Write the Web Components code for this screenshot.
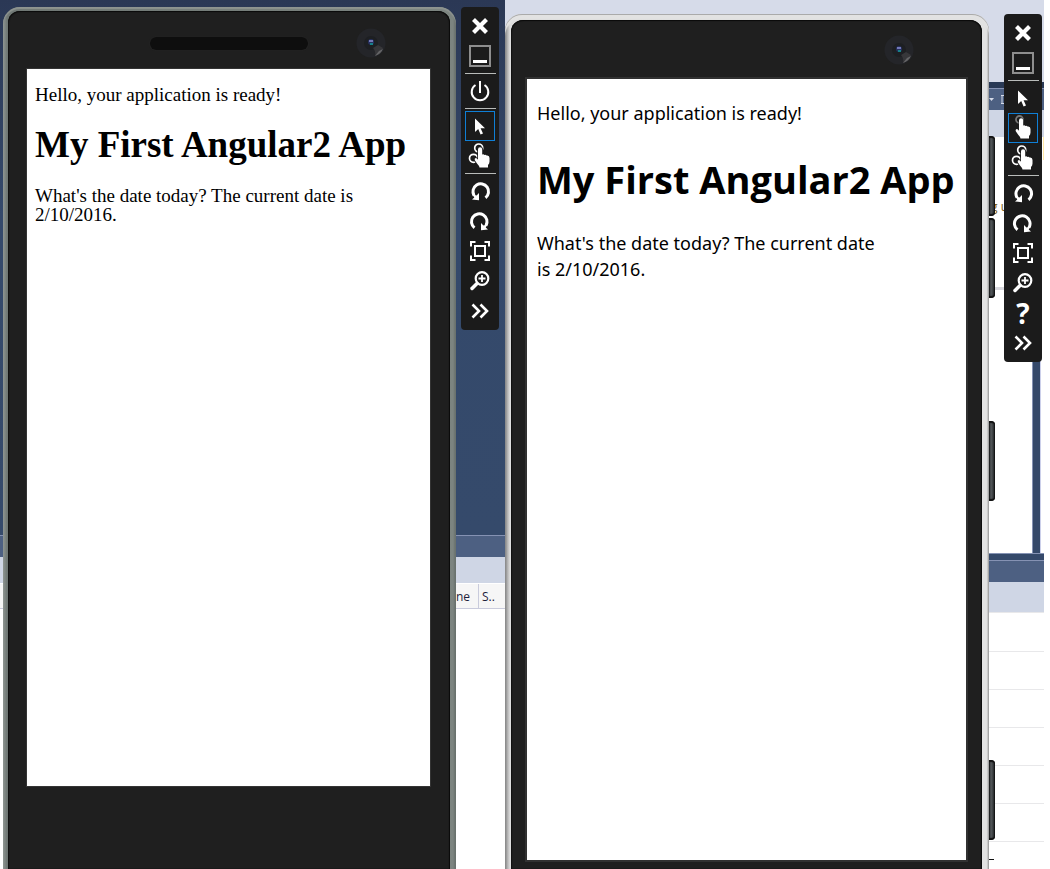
<!DOCTYPE html>
<html lang="en">
<head>
<meta charset="utf-8">
<title>Device emulators</title>
<style>
html, body { margin: 0; background: #fff; }
body { font-family: "Open Sans", sans-serif; }
</style>
</head>
<body>
<emulator-desktop>
  <emulator-scene class="android">
    <ide-output slot="backdrop"></ide-output>
    <phone-device class="dark" speaker>
      <p>Hello, your application is ready!</p>
      <h1>My First Angular2 App</h1>
      <p>What's the date today? The current date is 2/10/2016.</p>
    </phone-device>
    <tool-bar items="close,minimize,|,power,|,pointer*,multitouch,|,rotateleft,rotateright,fit,zoom,more"></tool-bar>
  </emulator-scene>
  <emulator-scene class="windows">
    <ide-window slot="backdrop"></ide-window>
    <phone-device class="light">
      <p>Hello, your application is ready!</p>
      <h1>My First Angular2 App</h1>
      <p>What's the date today? The current date<br>is 2/10/2016.</p>
    </phone-device>
    <side-keys></side-keys>
    <tool-bar items="close,minimize,|,pointer,touch*,multitouch,|,rotateleft,rotateright,fit,zoom,help,more"></tool-bar>
  </emulator-scene>
</emulator-desktop>

<script>
function define(name, markup, setup) {
  customElements.define(name, class extends HTMLElement {
    constructor() {
      super();
      this.attachShadow({ mode: "open" }).innerHTML = markup;
    }
    connectedCallback() {
      if (setup) setup(this, this.shadowRoot);
    }
  });
}

define("emulator-desktop", `
<style>
:host { display: grid; grid-template-columns: minmax(0, 505fr) minmax(0, 539fr); min-height: 100vh; padding-right: 6px; box-sizing: border-box; }
</style><slot></slot>`);

define("emulator-scene", `
<style>
:host { display: grid; overflow: hidden; }
.back, .front { grid-area: 1 / 1; display: flex; min-width: 0; }
.back ::slotted(*) { flex: 1; min-width: 0; }
.front { z-index: 1; align-items: flex-start; }
.front ::slotted(phone-device) { flex: 1; align-self: stretch; min-width: 0; }
:host(.android) .front { padding: 7px 6px 0 3px; gap: 5px; }
:host(.windows) .front { padding: 14px 2px 0 0; }
</style>
<div class="back"><slot name="backdrop"></slot></div>
<div class="front"><slot></slot></div>`);

define("ide-output", `
<style>
:host { display: flex; flex-direction: column; background: #fff; }
.desk { height: 535px; background: linear-gradient(#2b3855, #34496b 40%, #354a6b); }
.title { height: 21px; border-top: 1px solid #8592b3; background: #4d6082; }
.tools { height: 26px; background: #cfd6e5; }
.head { height: 24px; display: flex; justify-content: flex-end; border-top: 1px solid #fff; border-bottom: 1px solid #c9cbdc; background: #f6f6f6; color: #1e1e3c; font: 12px/24px "Open Sans", sans-serif; }
.head span { box-sizing: border-box; padding: 1px 8px 0 0; }
.head .last { width: 27px; padding: 1px 0 0 3px; border-left: 1px solid #c9cbdc; }
</style>
<div class="desk"></div><div class="title"></div><div class="tools"></div>
<div class="head"><span>ne</span><span class="last">S..</span></div>`);

define("ide-window", `
<style>
:host { display: flex; flex-direction: column; background: #fff; }
.sky { height: 82px; background: #d6dbe9; }
.edge { height: 6px; background: #293955; }
.menu { height: 21px; border-top: 1px solid #8592b3; background: #4d6082; display: flex; justify-content: flex-end; align-items: center; }
.menu svg { width: 20px; height: 12px; margin-right: 36px; }
.tools { height: 27px; background: #cfd6e5; }
.work { display: flex; height: 416px; }
.doc { flex: 1; display: flex; flex-direction: column; align-items: flex-end; border-right: 1px solid #8592b3; }
.code { height: 153px; width: 100%; box-sizing: border-box; padding: 60px 24px 0 0; border-bottom: 3px solid #d9d9df; text-align: right; color: #7a5c14; font: 12px/20px "Open Sans", sans-serif; }
.rail { width: 7px; background: #35496a; }
.side { width: 3px; border-left: 1px solid #ccd0ea; }
.mark { height: 23px; margin-left: 2px; background: #ffe8a6; }
.gap { height: 6px; border-top: 1px solid #8592b3; background: #35496a; }
.title { height: 21px; border-top: 1px solid #8592b3; background: #4d6082; }
.bar { height: 30px; background: #cfd6e5; }
.row { height: 37px; border-bottom: 1px solid #e8e8ea; }
.first { height: 38px; border-top: 1px solid #e8e8ea; }
.dash { width: 5px; height: 1px; margin: 17px 50px 0 0; align-self: flex-end; background: #111; }
</style>
<div class="sky"></div><div class="edge"></div>
<div class="menu"><svg viewBox="0 0 20 12" fill="none" stroke="#d6dbe9"><path d="M1 4h5l-2.500 3z" fill="#d6dbe9" stroke="none"/><path d="M17 1.500h-3v8h3M13 1.500h2M13 9.500h2"/></svg></div>
<div class="tools"></div>
<div class="work"><div class="doc"><div class="code">g u</div></div><div class="rail"></div><div class="side"><div class="mark"></div></div></div>
<div class="gap"></div><div class="title"></div><div class="bar"></div>
<div class="row first"></div><div class="row"></div><div class="row"></div><div class="row"></div><div class="row"></div><div class="row"></div>
<div class="dash"></div>`);

define("phone-device", `
<style>
:host { display: flex; box-sizing: border-box; border-radius: 17px 17px 0 0; }
:host(.dark) { padding: 4px 6px 0 5px; background: linear-gradient(90deg, #8f9692, #6f7774 4px, #7c8480 calc(100% - 3px), #626a67); box-shadow: inset 0 2px 1px #8e9490; }
:host(.light) { padding: 6px 7px 0 6px; background: linear-gradient(90deg, #777 0, #aaa 2px, #ddd 5px, #e2e2e2 calc(100% - 3px), #ddd calc(100% - 2px), #888 100%); box-shadow: inset 0 1px 0 #aaa, inset 0 5px 1px #e2e2e2; }
.body { flex: 1; min-width: 0; display: flex; flex-direction: column; border-radius: 12px 12px 0 0; background: #1f1f1f; box-shadow: inset 0 1px 1px #0b0b0b, inset 1px 0 1px #111, inset -1px 0 1px #0b0b0b; }
.head { height: 57px; display: grid; grid-template-columns: 1fr 158px 1fr; align-items: center; box-sizing: border-box; padding-top: 6px; }
:host(.light) .head { padding-top: 3px; }
.speaker { grid-column: 2; height: 13px; margin-top: 2px; border-radius: 6px; background: #0e0e0e; box-shadow: 0 0 1px #383838; visibility: hidden; }
:host([speaker]) .speaker { visibility: visible; }
.camera { width: 30px; height: 30px; grid-column: 3; justify-self: end; margin-right: 64px; }
:host(.light) .camera { margin-right: 68px; }
.screen { flex: 1; background: #fff; color: #000; box-sizing: border-box; }
:host(.dark) .screen { margin: 0 19px 82px 18px; border: 1px solid #343434; padding: 16px 8px; font-family: "Liberation Serif", serif; }
:host(.light) .screen { margin: 0 14px 7px; border: 2px solid #313131; padding: 21px 10px; font-family: "Noto Sans", "Open Sans", sans-serif; }
::slotted(p), ::slotted(h1) { margin: 0 !important; }
:host(.dark) ::slotted(p) { font-size: 19px; line-height: 19px; }
:host(.dark) ::slotted(h1) { font-size: 37px; line-height: 44px; margin: 19px 0 !important; white-space: nowrap; }
:host(.light) ::slotted(p) { font-size: 18px; line-height: 26px; }
:host(.light) ::slotted(h1) { font-family: "Open Sans", sans-serif; font-size: 38px; line-height: 52px; margin: 27px 0 25px !important; white-space: nowrap; }
</style>
<div class="body">
  <div class="head"><div class="speaker"></div>
    <svg class="camera" viewBox="0 0 30 30"><circle cx="15" cy="15" r="14.500" fill="#242529"/><circle cx="15" cy="15" r="7" fill="#1d1f22"/><path d="M17 20q3 3 2 8q6-2 8-8l-5-3z" fill="#37373a"/><path d="M19 28q6-2 8-7l-4 2z" fill="#656567"/><circle cx="15" cy="14" r="3" fill="#26305e"/><rect x="13" y="12" width="4" height="2" fill="#7379b8"/><rect x="14" y="15" width="3" height="2" fill="#16808a"/></svg>
  </div>
  <div class="screen"><slot></slot></div>
</div>`);

define("side-keys", `
<style>
:host { display: flex; flex-direction: column; width: 6px; margin-right: 9px; padding-top: 122px; }
i { height: 80px; border-radius: 0 4px 4px 0; background: linear-gradient(90deg, #17191a, #55595c 2px, #3a3e40 4px, #0d0d0d); box-shadow: inset 0 2px 1px #111, inset 0 -2px 1px #111; }
i + i { margin-top: 2px; }
i:nth-of-type(3) { margin-top: 123px; }
i:nth-of-type(4) { margin-top: 259px; }
</style><i></i><i></i><i></i><i></i>`);

const HAND_SHAPE = "M13 8.500q0-2.300 2.100-2.300t2.100 2.300v5q1.300-.8 2.200.4q1.300-.7 2.200.6q2.900-.5 2.900 2.500v3.500q0 2-1.500 3.500v2.500h-8.500q-.5-2-2.500-4l-2.200-3.200q-.6-2 1-2.200q1.200 0 2.200 1.600z";
const ROTATE = '<path d="M20.500 21.800A7.800 7.800 0 1 0 9 19.500" stroke-width="3"/><path d="M7 23.500l7 .7v-7.200l-2.500 2.500l-4.500-1.500l2.300 3.500z" fill="#fff" stroke="none"/>';
const ICONS = {
  close: ["Close", '<path d="M8.500 8.500l13 13M21.500 8.500L8.500 21.500" stroke-width="4.200"/>'],
  minimize: ["Minimize", '<rect x="5" y="5" width="20" height="20" stroke="#8e8e8e" stroke-width="2"/><path d="M8 20.500h14" stroke-width="3"/>'],
  power: ["Power", '<path d="M15 5v12M10.500 9A8.300 8.300 0 1 0 19.500 9"/>'],
  pointer: ["Mouse input", '<path d="M10 7.500v13.500l3.200-3l2.400 5.500l2.400-1l-2.400-5.300h4.400z" fill="#fff" stroke="none"/>'],
  touch: ["Single-point input", '<g transform="translate(-2 -1)"><circle cx="13.500" cy="7.500" r="3.500" stroke="#777" stroke-width="1.800"/><path d="' + HAND_SHAPE + '" fill="#fff" stroke="#1b1b1b" stroke-width="1" paint-order="stroke"/></g>'],
  multitouch: ["Multi-touch input", '<circle cx="13.700" cy="7" r="4" stroke-width="1.700"/><circle cx="8.500" cy="17.300" r="4" stroke-width="1.700"/><path d="' + HAND_SHAPE + '" fill="#fff" stroke="#1b1b1b" stroke-width="1.600" paint-order="stroke"/>'],
  rotateleft: ["Rotate left", ROTATE],
  rotateright: ["Rotate right", '<g transform="matrix(-1 0 0 1 30 0)">' + ROTATE + '</g>'],
  fit: ["Fit to screen", '<path d="M6 10.500V6h4.500M19.500 6H24v4.500M24 19.500V24h-4.500M10.500 24H6v-4.500"/><rect x="10" y="10" width="10" height="10"/>'],
  zoom: ["Zoom", '<circle cx="17" cy="12.500" r="6.300" stroke-width="2.200"/><path d="M17 9v7M13.500 12.500h7" stroke-width="1.800"/><path d="M12 17.500l-5 5" stroke-width="3.500" stroke-linecap="round"/>'],
  more: ["Additional tools", '<path d="M7.500 8.500L14 15l-6.500 6.500M15.500 8.500L22 15l-6.500 6.500" stroke-width="2.600"/>'],
  help: ["Help", ""]
};

define("tool-bar", `
<style>
:host { display: flex; flex-direction: column; width: 38px; box-sizing: border-box; padding: 4px; border-radius: 4px; background: #1b1b1b; }
button { width: 30px; height: 30px; padding: 0; border: 0; background: none; color: #fff; font: bold 28px/30px "Open Sans", sans-serif; }
button.on { box-shadow: inset 0 0 0 1px #0f7fd6; }
svg { display: block; width: 30px; height: 30px; }
hr { width: 31px; height: 1px; margin: 2px 0; border: 0; background: #b9bcba; }
</style>`, (host, root) => {
  for (const item of host.getAttribute("items").split(",")) {
    if (item === "|") { root.append(document.createElement("hr")); continue; }
    const name = item.replace("*", "");
    const button = document.createElement("button");
    button.type = "button";
    button.setAttribute("aria-label", ICONS[name][0]);
    if (item.endsWith("*")) button.className = "on";
    button.innerHTML = name === "help" ? "?" :
      '<svg viewBox="0 0 30 30" fill="none" stroke="#fff" stroke-width="2">' + ICONS[name][1] + "</svg>";
    root.append(button);
  }
});
</script>
</body>
</html>
